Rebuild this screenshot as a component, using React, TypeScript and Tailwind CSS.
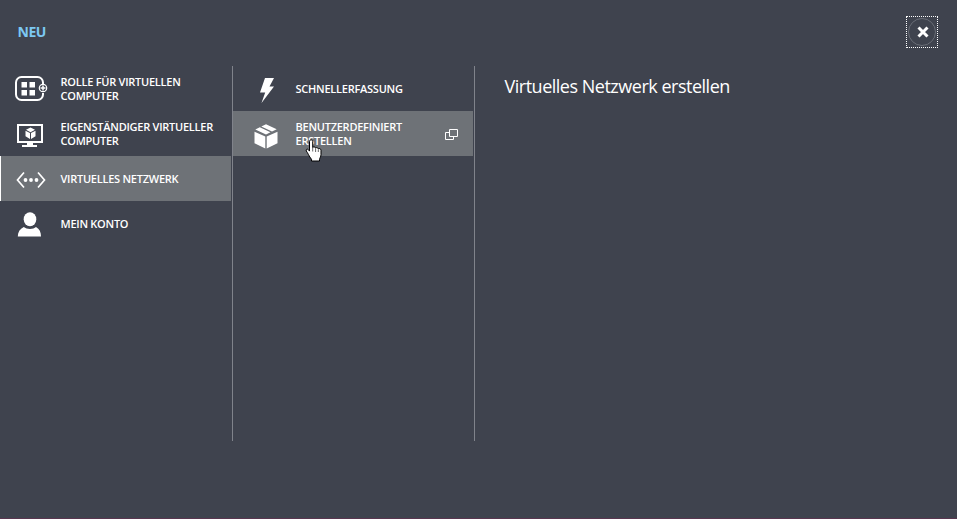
import React from 'react';
import { clsx } from 'clsx';

interface MenuItemProps {
    icon: React.ReactNode;
    lines: string[];
    active?: boolean;
    marker?: boolean;
    trailing?: React.ReactNode;
}

const RoleIcon = () => (
    <svg width="34" height="28" viewBox="0 0 34 28" fill="none" className="relative top-[0.5px]">
        <path d="M29 9V7.500A5.500 5.500 0 0 0 23.500 2h-16A5.500 5.500 0 0 0 2 7.500v12A5.500 5.500 0 0 0 7.500 25h16a5.500 5.500 0 0 0 5.500-5.500V18" stroke="#fff" strokeWidth="2" />
        <path d="M7.500 7h5.500v5.500H7.500zM15.500 7H21v5.500h-5.500zM7.500 15h5.500v5.500H7.500zM15.500 15H21v5.500h-5.500z" fill="#fff" />
        <circle cx="29" cy="13" r="3.700" stroke="#fff" strokeWidth="1.200" />
        <path d="M29 10.500v5M26.500 13h5" stroke="#fff" strokeWidth="1.500" />
    </svg>
);

const MonitorIcon = () => (
    <svg width="28" height="26" viewBox="0 0 28 26" fill="none" className="relative -left-px top-[1.5px]">
        <path d="M2 3h24v17H2z" stroke="#fff" strokeWidth="2" />
        <path d="M11 21h6v2h4v2H6v-2h5z" fill="#fff" />
        <path d="m14.500 5.500 4.500 2.300-4.500 2.400L10 7.800zM9.500 8.800l4.500 2.200v6l-4.500-2.700zM19.500 8.800 15 11v6l4.500-2.700z" fill="#fff" />
    </svg>
);

const NetworkIcon = () => (
    <svg width="30" height="18" viewBox="0 0 30 18" fill="none" className="relative top-px">
        <path d="M8 1.500 1.500 9 8 16.500M22 1.500 28.500 9 22 16.500" stroke="#fff" strokeWidth="1.700" />
        <circle cx="9.500" cy="9" r="1.900" fill="#fff" />
        <circle cx="15" cy="9" r="1.900" fill="#fff" />
        <circle cx="20.500" cy="9" r="1.900" fill="#fff" />
    </svg>
);

const PersonIcon = () => (
    <svg width="24" height="26" viewBox="0 0 24 26" fill="#fff" className="relative -left-0.5 top-[1.5px]">
        <ellipse cx="13" cy="7.300" rx="6.300" ry="7" />
        <path d="M.8 24.500c0-4.500 2-7.500 6-9.500 1.500 1.300 3.700 2 6.200 2s4.500-.7 6-2c3.500 2 5 5 5 9.500z" />
    </svg>
);

const BoltIcon = () => (
    <svg width="16" height="26" viewBox="0 0 16 26" fill="#fff" className="relative left-px top-[2.5px]">
        <path d="M6 0h9l-4.500 8.500H15L2.500 25l3.700-10.500H1z" />
    </svg>
);

const BoxIcon = () => (
    <svg width="24" height="26" viewBox="0 0 24 26" fill="#fff" className="relative top-0.5">
        <path d="M.5 8.700 11.300 13.500v12L.5 20.300zM23.500 8.700l-10.800 4.800v12l10.800-5.200z" />
        <path d="m1.300 6.500 4.500-2.300 10.700 5-4.500 2.300zM7.300 3.400 12 1.200l10.700 5-4.700 2.400z" />
    </svg>
);

const WindowsIcon = () => (
    <svg width="14" height="12" viewBox="0 0 14 12" fill="none" stroke="#fff" className="relative top-px">
        <path d="M4.500.5h8v7h-8z" />
        <path d="M4.500 3.500h-4v7h8v-3" />
    </svg>
);

const HandCursor = () => (
    <svg width="18" height="24" viewBox="0 0 18 24" className="absolute left-[305px] top-[139px]">
        <path
            d="M4.500 2.500c0-2.200 3.200-2.200 3.200 0v6c.5-1 2.700-.8 2.900.6.700-.9 2.600-.6 2.700.8.900-.8 2.700-.2 2.700 1.300v4.500c0 2-1.500 3.300-1.500 5V22h-8v-1.700c-1-1.500-2.300-2.900-3-4.600-.6-1.500-1.500-2.600-2.200-3.700-.8-1.500 1.200-2.600 2.200-1.200l1 1.300z"
            fill="#fff"
            stroke="#000"
        />
        <path d="M7.700 8.500v4M10.600 9.500v3.500M13.300 10.500V13" stroke="#000" strokeWidth=".6" />
    </svg>
);

const MenuItem: React.FC<MenuItemProps> = ({ icon, lines, active, marker, trailing }) => (
    <button
        className={clsx(
            'flex h-[45px] w-full items-center text-left',
            active ? 'bg-[#6e7277]' : 'bg-transparent',
            marker && 'shadow-[inset_1px_0_0_#fff]'
        )}
    >
        <span className="ml-3.5 flex w-[34px] shrink-0 justify-center">{icon}</span>
        <span className="ml-[12.5px] flex-1 whitespace-nowrap text-[11px] leading-[14px] font-semibold tracking-[-0.25px]">
            {lines.map((line) => (
                <span key={line} className="block">{line}</span>
            ))}
        </span>
        {trailing && <span className="mr-3.5">{trailing}</span>}
    </button>
);

export default function App() {
    return (
        <div className="relative flex h-[519px] w-[957px] flex-col overflow-hidden border-b border-[#59364f] bg-[#3f434e] font-['Open_Sans','Noto_Sans',sans-serif] text-white">
            <header className="flex h-[66px] items-start justify-between pl-[17.5px] pr-[19px] pt-4">
                <h1 className="text-[14px] leading-8 font-bold tracking-[-0.5px] text-[#7cc8f2]">NEU</h1>
                <button className="flex size-8 items-center justify-center border border-dotted border-white">
                    <span className="flex size-7 items-center justify-center rounded-full border border-[#696d76]">
                        <svg width="12" height="12" viewBox="0 0 12 12" stroke="#fff" strokeWidth="3" className="relative left-px">
                            <path d="m1.500 1.500 9 9M10.500 1.500l-9 9" />
                        </svg>
                    </span>
                </button>
            </header>

            <main className="flex h-[375px]">
                {/* Categories */}
                <nav className="w-[233px] border-r border-[#80838b] pr-px">
                    <MenuItem icon={<RoleIcon />} lines={['ROLLE FÜR VIRTUELLEN', 'COMPUTER']} />
                    <MenuItem icon={<MonitorIcon />} lines={['EIGENSTÄNDIGER VIRTUELLER', 'COMPUTER']} />
                    <MenuItem icon={<NetworkIcon />} lines={['VIRTUELLES NETZWERK']} active marker />
                    <MenuItem icon={<PersonIcon />} lines={['MEIN KONTO']} />
                </nav>

                {/* Actions */}
                <nav className="w-[242px] border-r border-[#80838b] pr-px [&>button]:pl-0.5">
                    <MenuItem icon={<BoltIcon />} lines={['SCHNELLERFASSUNG']} />
                    <MenuItem
                        icon={<BoxIcon />}
                        lines={['BENUTZERDEFINIERT', 'ERSTELLEN']}
                        active
                        trailing={<WindowsIcon />}
                    />
                </nav>

                <section className="pl-[29.5px] pt-2">
                    <h2 className="text-[18px] leading-[25px] tracking-[-0.49px]">Virtuelles Netzwerk erstellen</h2>
                </section>
            </main>

            <HandCursor />
        </div>
    );
}
